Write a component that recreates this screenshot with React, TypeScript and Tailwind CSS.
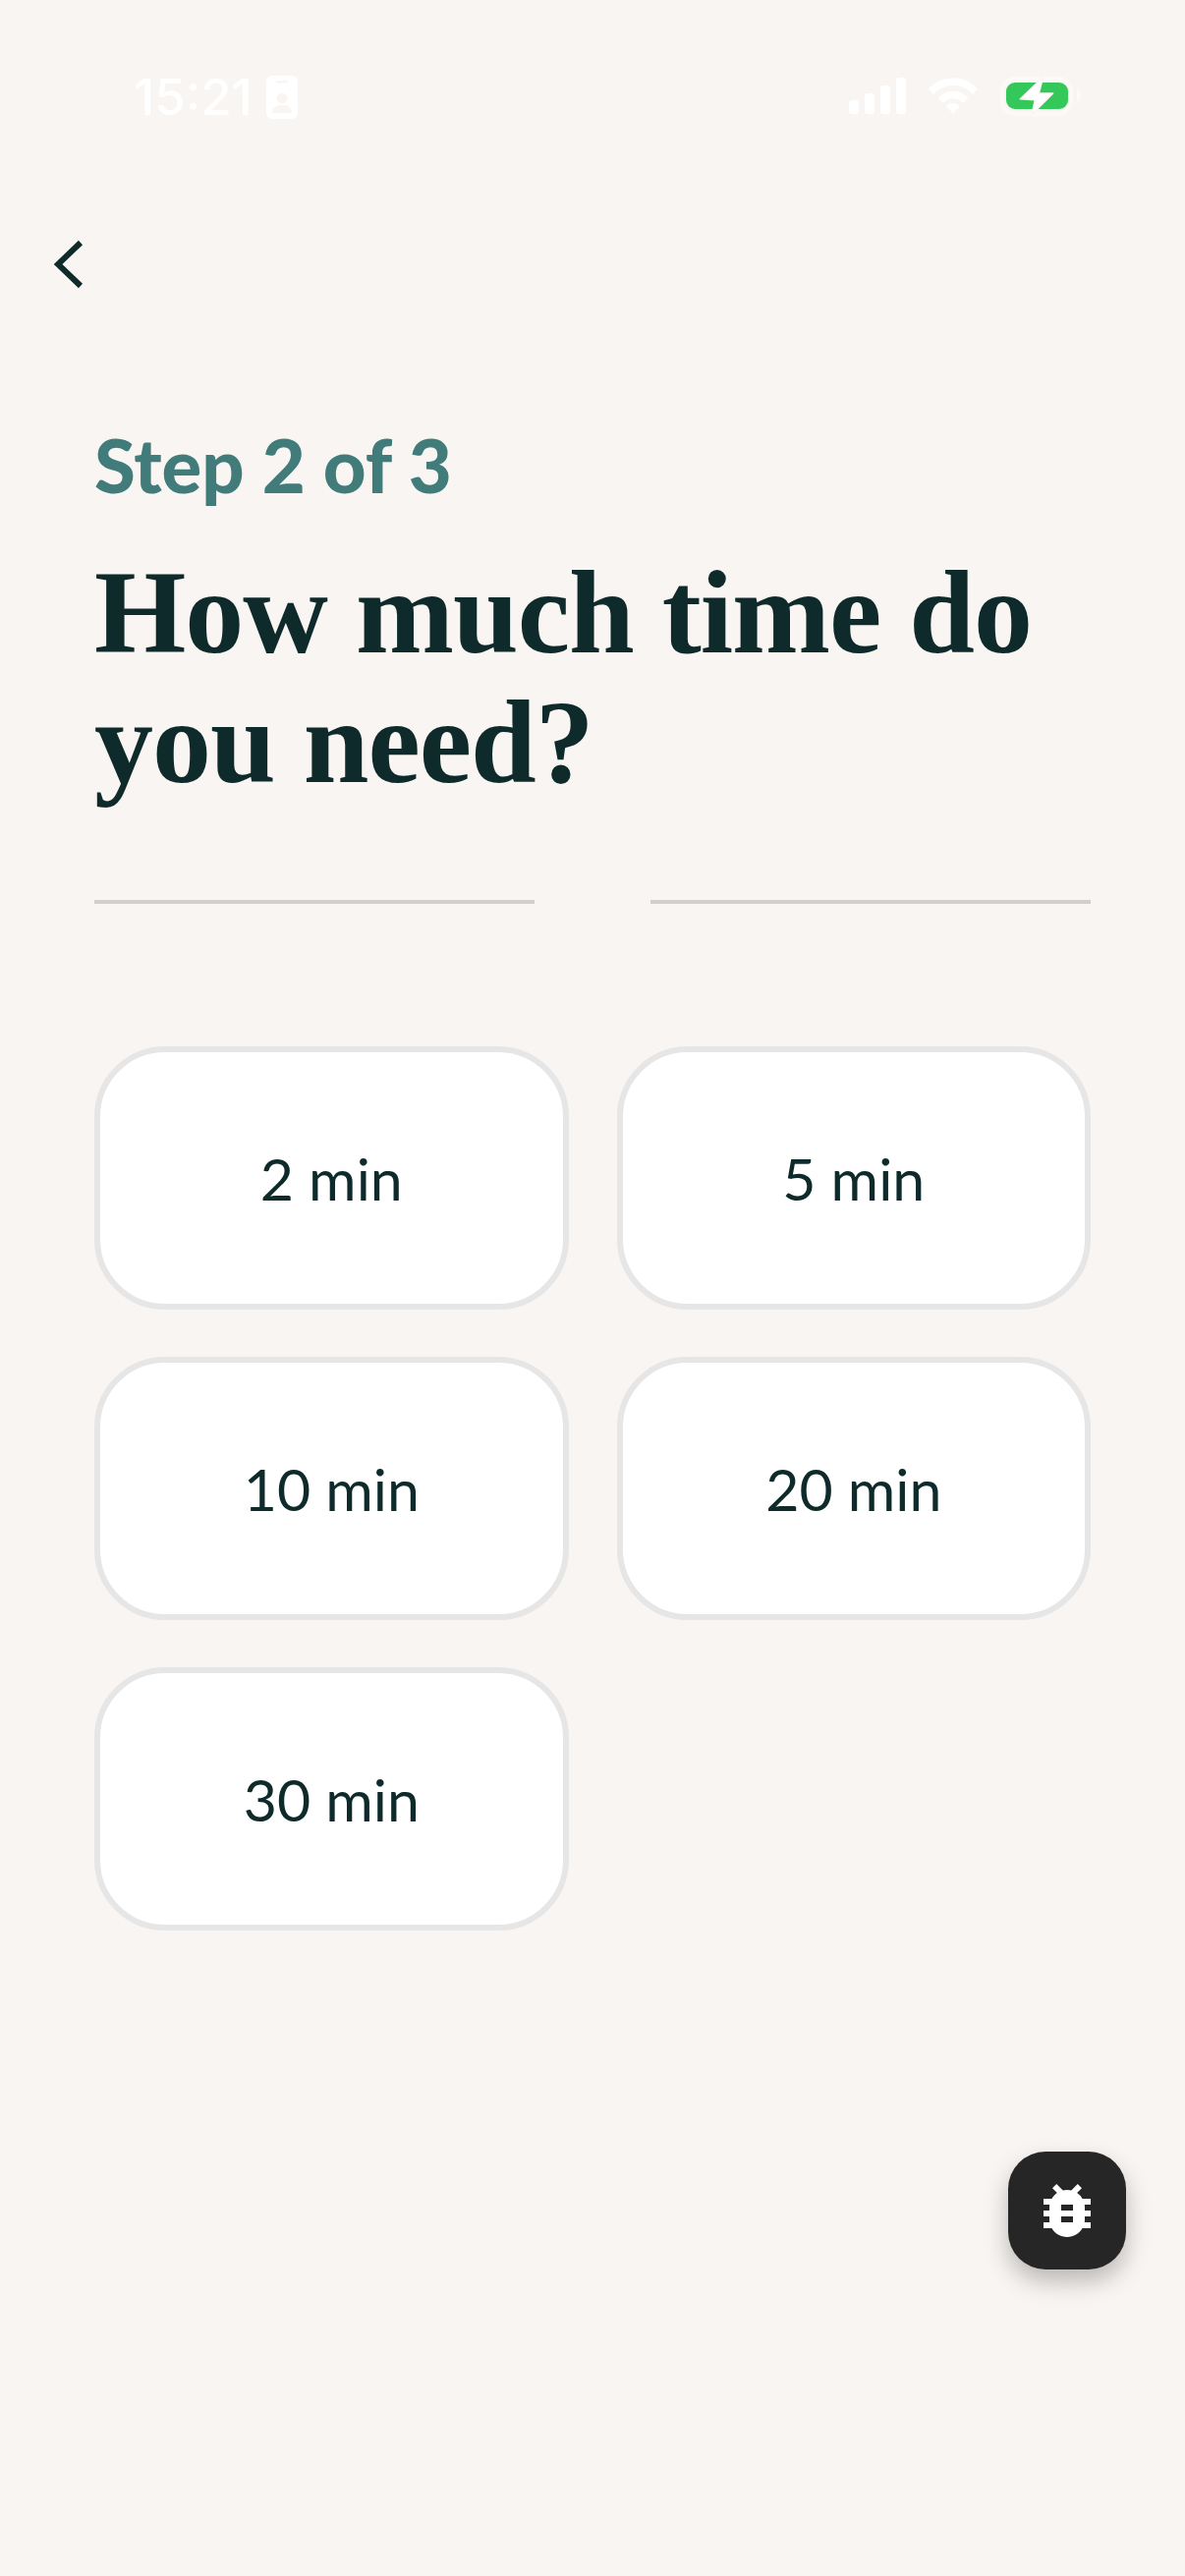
import { MdBugReport } from "react-icons/md";

const times = ["2 min", "5 min", "10 min", "20 min", "30 min"];

function IdBadge() {
  return (
    <svg width="32" height="44" viewBox="0 0 32 44" className="ml-[14px]">
      <rect width="32" height="44" rx="6" fill="#ffffff" />
      <rect x="10" y="5" width="12" height="2.5" rx="1" fill="#f8f5f2" />
      <circle cx="16" cy="23" r="5.2" fill="#f8f5f2" />
      <path d="M6 38c0-5.500 4.500-8 10-8s10 2.500 10 8z" fill="#f8f5f2" />
    </svg>
  );
}

function StatusIcons() {
  return (
    <div className="mt-[4px] flex items-center">
      <svg width="58" height="38" viewBox="0 0 58 38">
        <rect x="0" y="23" width="10" height="14" rx="3" fill="#fff" />
        <rect x="16" y="16" width="10" height="21" rx="3" fill="#fff" />
        <rect x="32" y="8" width="10" height="29" rx="3" fill="#fff" />
        <rect x="48" y="0" width="10" height="37" rx="3" fill="#fff" />
      </svg>
      <svg width="50" height="38" viewBox="0 0 50 38" className="ml-[23px]">
        <path d="M0 11.500C14-3.500 36-3.500 50 11.500L45 17C33 5 17 5 5 17z" fill="#fff" />
        <path d="M9.500 20.500C18 11.500 32 11.500 40.500 20.500L35.500 26C29 19.500 21 19.500 14.500 26z" fill="#fff" />
        <path d="M18 29C22 25 28 25 32 29L25 37z" fill="#fff" />
      </svg>
      <svg width="82" height="44" viewBox="0 0 82 44" className="ml-[23px]">
        <rect x="2" y="4" width="70" height="36" rx="13" fill="none" stroke="#fff" strokeOpacity="0.5" strokeWidth="4" />
        <rect x="6" y="8" width="63" height="27" rx="9" fill="#34c759" />
        <path d="M78 15c2.500 1 4 3.500 4 6.500s-1.500 5.500-4 6.500z" fill="#fff" fillOpacity="0.6" />
        <path
          d="M43.700 2.300L20.300 24.700l15 1L32 40.700 53.700 19H39.300z"
          fill="#fff"
          stroke="#f8f5f2"
          strokeWidth="1.500"
          strokeLinejoin="round"
        />
      </svg>
    </div>
  );
}

function TimeCard({ label }: { label: string }) {
  return (
    <button className="flex h-[268px] items-center justify-center rounded-[72px] border-[6px] border-[#e6e6e6] bg-white text-[59px] leading-none text-[#0f2a2a]">
      {label}
    </button>
  );
}

export default function App() {
  return (
    <main className="relative flex min-h-[2622px] w-[1206px] flex-col bg-[#f8f5f2] font-['Lato',sans-serif]">
      {/* status bar */}
      <header className="flex h-[196px] items-start justify-between pl-[136px] pr-[106px] pt-[72px]">
        <div className="flex items-center font-['Inter',sans-serif] text-[51px] font-medium leading-[54px] text-white">
          <span>15:21</span>
          <IdBadge />
        </div>
        <StatusIcons />
      </header>

      <div className="pl-[55px]">
        <svg width="30" height="50" viewBox="0 0 30 50" className="mt-[48px] block">
          <path d="M27 3L4 25l23 22" fill="none" stroke="#0f2a2a" strokeWidth="6" />
        </svg>
      </div>

      <section className="px-[96px]">
        <p className="mt-[137px] text-[76px] font-black leading-[84px] text-[#417c7b]">Step 2 of 3</p>
        <h1 className="mt-[43px] font-['Liberation_Serif',serif] text-[120px] font-bold leading-[132px] tracking-[-1px] text-[#0f2a2a]">
          How much time do you need?
        </h1>

        <div className="mt-[94px] flex justify-between">
          <div className="h-[4px] w-[448px] bg-[#cfd0cb]" />
          <div className="h-[4px] w-[448px] bg-[#cfd0cb]" />
        </div>

        <div className="mt-[145px] grid grid-cols-2 gap-x-[49px] gap-y-[48px]">
          {times.map((t) => (
            <TimeCard key={t} label={t} />
          ))}
        </div>
      </section>

      {/* debug button */}
      <button className="absolute left-[1026px] top-[2190px] flex h-[120px] w-[120px] items-center justify-center rounded-[38px] bg-[#262626] shadow-[0_12px_24px_rgba(0,0,0,0.25)]">
        <MdBugReport size={72} color="#ffffff" />
      </button>
    </main>
  );
}
